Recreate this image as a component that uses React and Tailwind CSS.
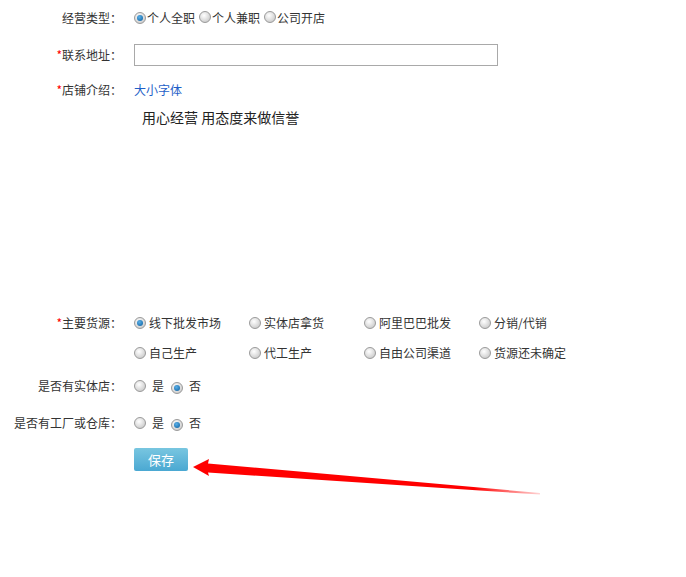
import React from "react";

function Radio({ checked }) {
  return (
    <span className="inline-flex h-[12px] w-[12px] shrink-0 items-center justify-center rounded-full border border-[#9a9a9a] bg-[radial-gradient(circle_at_40%_35%,#ffffff,#d2d2d2_70%,#b8b8b8)]">
      {checked && (
        <span className="block h-[6px] w-[6px] rounded-full bg-[radial-gradient(circle_at_40%_35%,#5ab0e8,#0a5c9c)]" />
      )}
    </span>
  );
}

function Label({ req, children }) {
  return (
    <div className="w-[122px] shrink-0 text-right text-[#333]">
      {req && <span className="text-[#ff0000]">*</span>}
      {children}
    </div>
  );
}

export default function App() {
  const font = { fontFamily: '"Noto Sans CJK SC", "Noto Sans", sans-serif' };
  const sources = [
    ["线下批发市场", true],
    ["实体店拿货", false],
    ["阿里巴巴批发", false],
    ["分销/代销", false],
    ["自己生产", false],
    ["代工生产", false],
    ["自由公司渠道", false],
    ["货源还未确定", false],
  ];
  return (
    <div className="relative h-[577px] w-[686px] bg-white text-[12px] leading-[20px] text-[#333]" style={font}>
      <div className="pt-[8px]">
        <div className="flex h-[20px] items-center">
          <Label>经营类型：</Label>
          <div className="ml-[12px] flex items-center">
            <Radio checked />
            <span className="ml-[1px]">个人全职</span>
            <span className="ml-[4px]"><Radio /></span>
            <span className="ml-[1px]">个人兼职</span>
            <span className="ml-[4px]"><Radio /></span>
            <span className="ml-[1px]">公司开店</span>
          </div>
        </div>

        <div className="mt-[16px] flex h-[22px] items-center">
          <Label req>联系地址：</Label>
          <div className="ml-[12px] h-[22px] w-[364px] border border-[#a9a9a9] bg-white" />
        </div>

        <div className="mt-[14px] flex h-[20px] items-center">
          <Label req>店铺介绍：</Label>
          <a className="ml-[12px] text-[#1f5fc8]">大小字体</a>
        </div>

        <div className="ml-[142px] mt-[7px] h-[20px] text-[14px] leading-[20px] text-[#222]">用心经营 用态度来做信誉</div>

        <div className="mt-[186px] flex">
          <Label req><span className="leading-[20px]">主要货源：</span></Label>
          <div className="ml-[12px] grid w-[460px] grid-cols-4 gap-y-[10px]">
            {sources.map(([t, c]) => (
              <div key={t} className="flex h-[20px] items-center">
                <Radio checked={c} />
                <span className="ml-[3px]">{t}</span>
              </div>
            ))}
          </div>
        </div>

        <div className="mt-[13px] flex h-[20px] items-center">
          <Label>是否有实体店：</Label>
          <div className="ml-[12px] flex items-center">
            <Radio />
            <span className="ml-[6px]">是</span>
            <span className="ml-[7px]"><Radio checked /></span>
            <span className="ml-[6px]">否</span>
          </div>
        </div>

        <div className="mt-[17px] flex h-[20px] items-center">
          <Label>是否有工厂或仓库：</Label>
          <div className="ml-[12px] flex items-center">
            <Radio />
            <span className="ml-[6px]">是</span>
            <span className="ml-[7px]"><Radio checked /></span>
            <span className="ml-[6px]">否</span>
          </div>
        </div>

        <div className="ml-[134px] mt-[15px]">
          <button className="flex h-[23px] w-[54px] items-center justify-center rounded-[2px] bg-gradient-to-b from-[#78c6e0] to-[#4aa8d2] text-[13px] text-white">
            保存
          </button>
        </div>
      </div>

      <svg className="absolute left-0 top-0" width="686" height="577" viewBox="0 0 686 577">
        <defs>
          <linearGradient id="fade" x1="194" y1="0" x2="545" y2="0" gradientUnits="userSpaceOnUse">
            <stop offset="0" stopColor="#ff0000" />
            <stop offset="0.8" stopColor="#ff0000" />
            <stop offset="1" stopColor="#ff0000" stopOpacity="0.1" />
          </linearGradient>
        </defs>
        <polygon
          points="193,467 209,459 208,463.5 540,493 540,494.5 208,472.5 209,476"
          fill="url(#fade)"
        />
      </svg>
    </div>
  );
}
